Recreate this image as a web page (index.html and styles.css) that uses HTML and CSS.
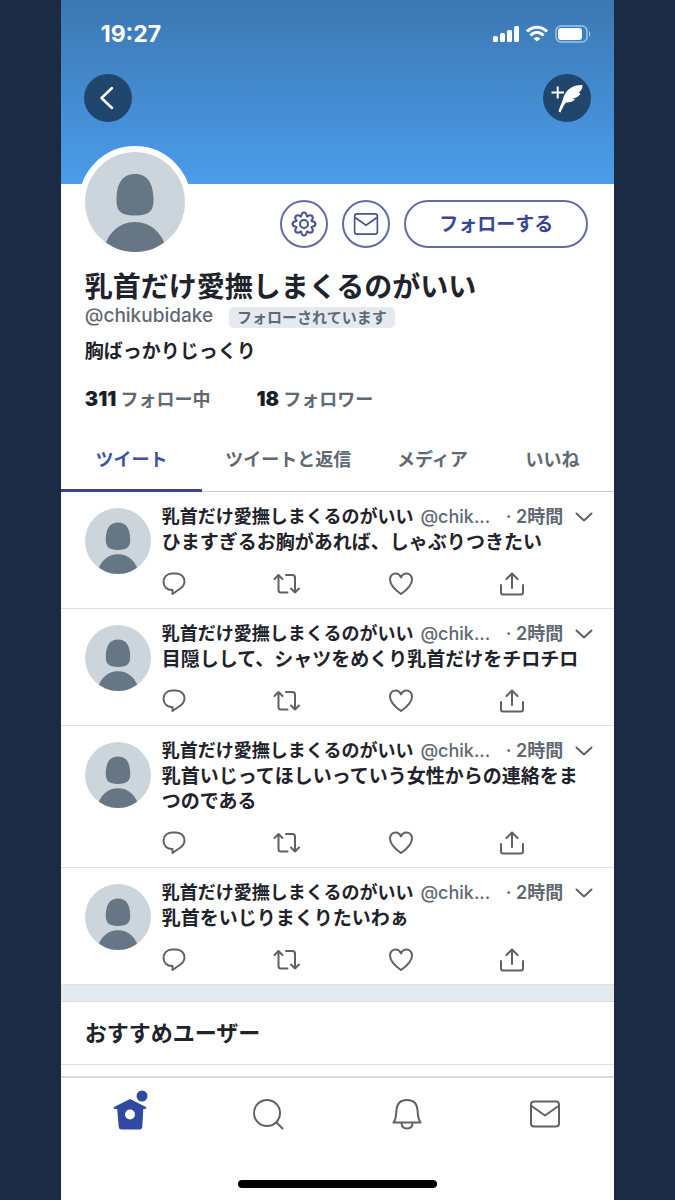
FILE: index.html
```html
<!DOCTYPE html>
<html lang="ja">
<head>
<meta charset="utf-8">
<meta name="viewport" content="width=device-width, initial-scale=1">
<title>プロフィール</title>
<link rel="stylesheet" href="styles.css">
</head>
<body>
<svg class="sprite" aria-hidden="true">
  <symbol id="avatar" viewBox="0 0 100 100">
    <rect width="100" height="100" fill="#ccd5dc"/>
    <path d="M50 22c13 0 18 10 18.500 24 .5 13-4 17.500-18.500 17.500S31 59 31.500 46C32 32 37 22 50 22z" fill="#677685"/>
    <path d="M18 100c4-19 16-30 32-30s28 11 32 30z" fill="#677685"/>
  </symbol>
  <symbol id="reply" viewBox="0 0 24 24"><path d="M10 1.500h4c5 0 8.500 3.500 8.500 8 0 4-2.500 6.500-7 9L10.500 22v-4H10c-5 0-8.500-3.500-8.500-8.200C1.500 5 5 1.500 10 1.500z"/></symbol>
  <symbol id="retweet" viewBox="0 0 28 24"><path d="M1.500 7 5.500 3 9.500 7M5.500 3V18q0 2.500 2.500 2.500h6.500M13 3h6.500Q22 3 22 5.500v15M18 16.500l4 4 4-4"/></symbol>
  <symbol id="heart" viewBox="0 0 24 24"><path d="M12 22C7 18.500 1 13.500 1 7.500 1 4 3.500 1.500 6.500 1.500c2.500 0 4.500 1.500 5.500 4 1-2.500 3-4 5.500-4 3 0 5.500 2.500 5.500 6 0 6-6 11-11 14.500z"/></symbol>
  <symbol id="share" viewBox="0 0 24 24"><path d="M12 16V1.500M6.500 7 12 1.500 17.500 7M1 13v7.500Q1 22.500 3 22.500h18q2 0 2-2V13"/></symbol>
  <symbol id="down" viewBox="0 0 18 18"><path d="m1.500 5.500 7.500 7 7.500-7"/></symbol>
  <symbol id="mail" viewBox="0 0 32 32"><rect x="2" y="3.500" width="28" height="25" rx="3"/><path d="m2.500 8 13.500 9.500L29.500 8"/></symbol>
</svg>
<div class="phone">
  <header class="banner">
    <div class="status">
      <time class="clock">19:27</time>
      <div class="signals">
        <svg width="27" height="18" viewBox="0 0 27 18" fill="#fff"><rect x="1" y="11" width="5" height="6" rx="1.500"/><rect x="8" y="8" width="5" height="9" rx="1.500"/><rect x="15" y="5" width="5" height="12" rx="1.500"/><rect x="22" y="1" width="5" height="16" rx="1.500"/></svg>
        <svg width="24" height="18" viewBox="0 0 24 18" fill="none" stroke="#fff" stroke-width="3"><path d="M2 6.500C7.500.700 16.500.700 22 6.500M5.500 10.500c4-4 9-4 13 0"/><path d="m12 16.500-3.500-3q3.500-3 7 0z" fill="#fff" stroke="none"/></svg>
        <svg width="36" height="18" viewBox="0 0 36 18"><rect x="1" y="1" width="31" height="16" rx="5" fill="none" stroke="#9fc4ea" stroke-width="1.500"/><rect x="3" y="3" width="24" height="12" rx="3" fill="#fff"/><path d="M34 6q3 3 0 6z" fill="#9fc4ea"/></svg>
      </div>
    </div>
    <div class="banner-buttons">
      <button class="round" aria-label="戻る"><svg width="48" height="48" viewBox="0 0 48 48" fill="none" stroke="#fff" stroke-width="2.500" stroke-linecap="round" stroke-linejoin="round"><path d="M28 14 17.500 24 28 34"/></svg></button>
      <button class="round" aria-label="ツイートする"><svg width="48" height="48" viewBox="0 0 48 48"><path d="M8.500 18.500h12.500M14.700 12.500v12" stroke="#fff" stroke-width="2"/><path d="M39.500 11C31 10.500 23 15 20.500 23.500 19 29 16.500 33 15.500 37.500L17.500 38.500C19 34.500 20.500 31.500 23 28.500 26.500 28.700 30 28 32 25.300L29.500 24.300C33 24.300 36 22.500 37.500 19.500L35.500 18.700C38 17 39.500 15 39.500 11z" fill="#fff"/></svg></button>
    </div>
  </header>
  <main class="content">
    <section class="profile">
      <div class="profile-top">
        <svg class="profile-avatar" role="img" aria-label="プロフィール画像"><use href="#avatar"/></svg>
        <div class="profile-actions">
          <button class="pill icon-pill" aria-label="設定"><svg width="26" height="26" viewBox="0 0 26 26"><path d="M11 2.500Q13 .5 15 2.500L16 5.500 19 4.200Q21.800 4.200 21.800 7L20.500 10 23.500 11Q25.500 13 23.500 15L20.500 16 21.800 19Q21.800 21.800 19 21.800L16 20.500 15 23.500Q13 25.500 11 23.500L10 20.500 7 21.800Q4.200 21.800 4.200 19L5.500 16 2.500 15Q.5 13 2.500 11L5.500 10 4.200 7Q4.200 4.200 7 4.200L10 5.500z"/><circle cx="13" cy="13" r="4"/></svg></button>
          <button class="pill icon-pill" aria-label="メッセージ"><svg width="26" height="26"><use href="#mail"/></svg></button>
          <button class="pill follow">フォローする</button>
        </div>
      </div>
      <h1 class="name">乳首だけ愛撫しまくるのがいい</h1>
      <div class="identity"><span class="handle">@chikubidake</span><span class="badge">フォローされています</span></div>
      <p class="bio">胸ばっかりじっくり</p>
      <div class="stats"><a href="#following"><b>311</b> フォロー中</a><a href="#followers"><b>18</b> フォロワー</a></div>
    </section>
    <nav class="tabs">
      <a class="tab active" href="#tweets">ツイート</a>
      <a class="tab" href="#replies">ツイートと返信</a>
      <a class="tab" href="#media">メディア</a>
      <a class="tab" href="#likes">いいね</a>
    </nav>
    <article class="tweet">
      <svg class="avatar"><use href="#avatar"/></svg>
      <div class="tweet-main">
        <div class="tweet-head"><b class="author">乳首だけ愛撫しまくるのがいい</b><span class="tweet-handle">@chik...</span><time class="time">· 2時間</time><button class="icon-button" aria-label="メニュー"><svg width="18" height="18"><use href="#down"/></svg></button></div>
        <p class="tweet-text">ひますぎるお胸があれば、しゃぶりつきたい</p>
        <div class="tweet-actions">
          <button class="icon-button" aria-label="返信"><svg width="24" height="24"><use href="#reply"/></svg></button>
          <button class="icon-button" aria-label="リツイート"><svg width="28" height="24"><use href="#retweet"/></svg></button>
          <button class="icon-button" aria-label="いいね"><svg width="24" height="24"><use href="#heart"/></svg></button>
          <button class="icon-button" aria-label="共有"><svg width="24" height="24"><use href="#share"/></svg></button>
        </div>
      </div>
    </article>
    <article class="tweet">
      <svg class="avatar"><use href="#avatar"/></svg>
      <div class="tweet-main">
        <div class="tweet-head"><b class="author">乳首だけ愛撫しまくるのがいい</b><span class="tweet-handle">@chik...</span><time class="time">· 2時間</time><button class="icon-button" aria-label="メニュー"><svg width="18" height="18"><use href="#down"/></svg></button></div>
        <p class="tweet-text">目隠しして、シャツをめくり乳首だけをチロチロ</p>
        <div class="tweet-actions">
          <button class="icon-button" aria-label="返信"><svg width="24" height="24"><use href="#reply"/></svg></button>
          <button class="icon-button" aria-label="リツイート"><svg width="28" height="24"><use href="#retweet"/></svg></button>
          <button class="icon-button" aria-label="いいね"><svg width="24" height="24"><use href="#heart"/></svg></button>
          <button class="icon-button" aria-label="共有"><svg width="24" height="24"><use href="#share"/></svg></button>
        </div>
      </div>
    </article>
    <article class="tweet">
      <svg class="avatar"><use href="#avatar"/></svg>
      <div class="tweet-main">
        <div class="tweet-head"><b class="author">乳首だけ愛撫しまくるのがいい</b><span class="tweet-handle">@chik...</span><time class="time">· 2時間</time><button class="icon-button" aria-label="メニュー"><svg width="18" height="18"><use href="#down"/></svg></button></div>
        <p class="tweet-text">乳首いじってほしいっていう女性からの連絡をまつのである</p>
        <div class="tweet-actions">
          <button class="icon-button" aria-label="返信"><svg width="24" height="24"><use href="#reply"/></svg></button>
          <button class="icon-button" aria-label="リツイート"><svg width="28" height="24"><use href="#retweet"/></svg></button>
          <button class="icon-button" aria-label="いいね"><svg width="24" height="24"><use href="#heart"/></svg></button>
          <button class="icon-button" aria-label="共有"><svg width="24" height="24"><use href="#share"/></svg></button>
        </div>
      </div>
    </article>
    <article class="tweet">
      <svg class="avatar"><use href="#avatar"/></svg>
      <div class="tweet-main">
        <div class="tweet-head"><b class="author">乳首だけ愛撫しまくるのがいい</b><span class="tweet-handle">@chik...</span><time class="time">· 2時間</time><button class="icon-button" aria-label="メニュー"><svg width="18" height="18"><use href="#down"/></svg></button></div>
        <p class="tweet-text">乳首をいじりまくりたいわぁ</p>
        <div class="tweet-actions">
          <button class="icon-button" aria-label="返信"><svg width="24" height="24"><use href="#reply"/></svg></button>
          <button class="icon-button" aria-label="リツイート"><svg width="28" height="24"><use href="#retweet"/></svg></button>
          <button class="icon-button" aria-label="いいね"><svg width="24" height="24"><use href="#heart"/></svg></button>
          <button class="icon-button" aria-label="共有"><svg width="24" height="24"><use href="#share"/></svg></button>
        </div>
      </div>
    </article>
    <section class="suggested"><h2 class="suggested-title">おすすめユーザー</h2></section>
  </main>
  <footer class="dock">
    <nav class="dock-nav">
      <a href="#home" aria-label="ホーム"><svg width="36" height="36" viewBox="0 0 36 36"><path d="M18 3 33.500 10.800Q35.500 13 33 13H31.300L30.300 31Q30 33.500 27.500 33.500H9.500Q7 33.500 6.700 31L5.200 13H3Q.5 13 2.500 10.800z" class="home-shape"/><circle cx="18" cy="18.500" r="5" class="home-hole"/><circle cx="30" cy="0" r="5.500" class="home-shape"/></svg></a>
      <a href="#search" aria-label="検索"><svg width="32" height="32" viewBox="0 0 32 32"><circle cx="15" cy="15" r="13"/><path d="m24.500 24.500 6 6"/></svg></a>
      <a href="#notifications" aria-label="通知"><svg width="32" height="32" viewBox="0 0 32 32"><path d="M2.500 24.500C5 21.500 5 18 5.500 12 6 5 10 2 16 2s10 3 10.500 10c.5 6 .5 9.500 3 12.500zM10.500 24.500c0 3.500 2 6 5.500 6s5.500-2.500 5.500-6"/></svg></a>
      <a href="#messages" aria-label="メッセージ"><svg width="32" height="32"><use href="#mail"/></svg></a>
    </nav>
    <div class="home-indicator"></div>
  </footer>
</div>
</body>
</html>
```

FILE: styles.css
```css
* { box-sizing: border-box; }
body {
  margin: 0;
  background: #1b2b43;
  color: #1f232b;
  font-family: Inter, "Noto Sans CJK JP", sans-serif;
  font-size: 18px;
  line-height: 25px;
}
h1, h2, p { margin: 0; }
a { color: inherit; text-decoration: none; }
svg { display: block; flex: none; }
button { font: inherit; color: inherit; background: none; border: 0; padding: 0; margin: 0; }
.sprite { position: absolute; width: 0; height: 0; }
.phone {
  display: flex;
  flex-direction: column;
  min-height: 100vh;
  margin: 0 9%;
  background: #fff;
}

.banner {
  padding: 20px 23px 62px;
  background: linear-gradient(#3c78b2, #4b9ceb);
}
.status { display: flex; justify-content: space-between; align-items: center; height: 28px; padding-left: 17px; }
.clock { color: #fff; font-size: 23px; font-weight: 700; }
.signals { display: flex; gap: 6px; align-items: center; }
.banner-buttons { display: flex; justify-content: space-between; margin-top: 26px; }
.round { width: 48px; height: 48px; border-radius: 50%; background: #20466d; }

.content { flex: 1; }
.profile { padding: 0 26px 0 24px; }
.profile-top { display: flex; justify-content: space-between; align-items: flex-start; height: 87px; }
.profile-avatar {
  width: 112px;
  height: 112px;
  margin: -38px 0 0 -6px;
  border: 6px solid #fff;
  border-radius: 50%;
  background: #fff;
}
.profile-actions { display: flex; gap: 14px; margin-top: 16px; }
.pill { height: 48px; border: 2px solid #626ba6; border-radius: 24px; color: #3a4694; }
.icon-pill { display: grid; place-items: center; width: 48px; }
.icon-pill svg { fill: none; stroke: #48528c; stroke-width: 2; stroke-linejoin: round; overflow: visible; }
.follow { padding: 0 33px; font-size: 19px; font-weight: 700; }
.name { font-size: 28px; line-height: 32px; font-weight: 700; white-space: nowrap; }
.identity { display: flex; align-items: center; gap: 16px; height: 25px; color: #5f6973; }
.handle { font-size: 19px; font-weight: 500; }
.badge { padding: 0 8px; margin-top: 4px; border-radius: 5px; background: #e5eaf0; font-size: 15px; line-height: 21px; font-weight: 700; }
.bio { margin-top: 11px; font-size: 19px; font-weight: 700; }
.stats { display: flex; gap: 46px; margin-top: 23px; color: #5f6973; font-weight: 700; }
.stats b { color: #1b1f27; font-size: 20px; }

.tabs { display: flex; margin-top: 20px; border-bottom: 1px solid #c9ced3; color: #5f6973; font-weight: 700; }
.tab { flex: 1 1 auto; padding: 15px 22px 17px; margin-bottom: -1px; border-bottom: 3px solid transparent; text-align: center; white-space: nowrap; }
.tab:first-child, .tab:last-child { padding-left: 34px; padding-right: 34px; }
.tab.active { color: #3f50ad; border-color: #39458e; }

.tweet { display: flex; gap: 11px; padding: 12px 21px 12px 24px; border-bottom: 1px solid #dfe2e5; }
.avatar { width: 66px; height: 66px; margin-top: 4px; border-radius: 50%; }
.tweet-main { flex: 1; min-width: 0; }
.tweet-head { display: flex; align-items: center; height: 25px; white-space: nowrap; color: #5f6973; font-weight: 500; }
.author { margin-right: 7px; color: #1f232b; font-weight: 700; }
.time { margin-left: auto; margin-right: 12px; font-weight: 600; }
.tweet-text { margin-top: 1px; font-size: 19px; font-weight: 700; }
.tweet-actions { display: flex; justify-content: space-between; margin-top: 17px; padding-right: 16%; }
.icon-button svg { fill: none; stroke: #5d6268; stroke-width: 2; stroke-linecap: round; stroke-linejoin: round; }

.suggested { border-top: 16px solid #e5eaee; border-bottom: 1px solid #dfe2e5; }
.suggested-title { padding: 15px 24px; border-top: 1px solid #d5dade; font-size: 22px; line-height: 32px; font-weight: 700; }

.dock { margin-top: 11px; padding-bottom: 12px; border-top: 2px solid #d8dadc; }
.dock-nav { display: grid; grid-template-columns: repeat(4, 1fr); height: 72px; }
.dock-nav a { display: grid; place-items: center; }
.dock-nav svg { fill: none; stroke: #5d6268; stroke-width: 2; stroke-linejoin: round; stroke-linecap: round; overflow: visible; }
.dock-nav .home-shape { fill: #2f4aa0; stroke: none; }
.dock-nav .home-hole { fill: #fff; stroke: none; }
.home-indicator { width: 36%; height: 8px; margin: 30px auto 0; border-radius: 4px; background: #000; }
```
